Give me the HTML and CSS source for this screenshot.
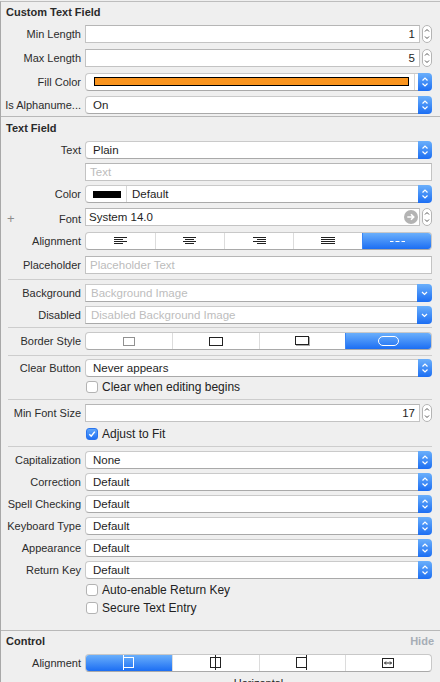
FILE: index.html
```html
<!DOCTYPE html>
<html>
<head>
<meta charset="utf-8">
<link rel="stylesheet" href="styles.css">
</head>
<body>
<div class="panel">
  <section class="sec">
    <div class="head h20"><span>Custom Text Field</span></div>
    <div class="row tall">
      <span class="lbl">Min Length</span>
      <div class="stepctl"><div class="field num">1</div>
        <svg class="stepper" width="10" height="18" viewBox="0 0 10 18"><rect x="0.5" y="0.5" width="9" height="17" rx="4.5" fill="#fff" stroke="#b4b4b4"/><path d="M3 6.5L5 4.5L7 6.5M3 11.5L5 13.5L7 11.5" fill="none" stroke="#555" stroke-width="1"/></svg></div>
    </div>
    <div class="row tall">
      <span class="lbl">Max Length</span>
      <div class="stepctl"><div class="field num">5</div>
        <svg class="stepper" width="10" height="18" viewBox="0 0 10 18"><rect x="0.5" y="0.5" width="9" height="17" rx="4.5" fill="#fff" stroke="#b4b4b4"/><path d="M3 6.5L5 4.5L7 6.5M3 11.5L5 13.5L7 11.5" fill="none" stroke="#555" stroke-width="1"/></svg></div>
    </div>
    <div class="row mid">
      <span class="lbl">Fill Color</span>
      <div class="popup"><span class="pv fill"><span class="swatch orange"></span><span class="vdiv"></span></span>
        <span class="pbtn"><svg width="14" height="18" viewBox="0 0 14 18"><path d="M4.5 7.5L7 5L9.5 7.5M4.5 10.5L7 13L9.5 10.5" fill="none" stroke="#fff" stroke-width="1.2"/></svg></span></div>
    </div>
    <div class="row mid">
      <span class="lbl">Is Alphanume...</span>
      <div class="popup"><span class="pv">On</span>
        <span class="pbtn"><svg width="14" height="18" viewBox="0 0 14 18"><path d="M4.5 7.5L7 5L9.5 7.5M4.5 10.5L7 13L9.5 10.5" fill="none" stroke="#fff" stroke-width="1.2"/></svg></span></div>
    </div>
  </section>

  <section class="sec">
    <div class="head h21"><span>Text Field</span></div>
    <div class="row mid">
      <span class="lbl">Text</span>
      <div class="popup"><span class="pv">Plain</span>
        <span class="pbtn"><svg width="14" height="18" viewBox="0 0 14 18"><path d="M4.5 7.5L7 5L9.5 7.5M4.5 10.5L7 13L9.5 10.5" fill="none" stroke="#fff" stroke-width="1.2"/></svg></span></div>
    </div>
    <div class="row">
      <span class="lbl"></span>
      <div class="field ph">Text</div>
    </div>
    <div class="row">
      <span class="lbl">Color</span>
      <div class="popup"><span class="pv color"><span class="swatch black"></span><span class="vdiv"></span><span class="ctext">Default</span></span>
        <span class="pbtn"><svg width="14" height="18" viewBox="0 0 14 18"><path d="M4.5 7.5L7 5L9.5 7.5M4.5 10.5L7 13L9.5 10.5" fill="none" stroke="#fff" stroke-width="1.2"/></svg></span></div>
    </div>
    <div class="row tall">
      <span class="lbl split low"><span class="plus">+</span><span>Font</span></span>
      <div class="stepctl"><div class="field font"><span>System 14.0</span>
          <svg width="14" height="14" viewBox="0 0 14 14"><circle cx="7" cy="7" r="7" fill="#b3b3b3"/><path d="M3.3 7h6.4M7 4.3L9.7 7L7 9.7" stroke="#fff" stroke-width="1.6" fill="none"/></svg></div>
        <svg class="stepper" width="10" height="18" viewBox="0 0 10 18"><rect x="0.5" y="0.5" width="9" height="17" rx="4.5" fill="#fff" stroke="#b4b4b4"/><path d="M3 6.5L5 4.5L7 6.5M3 11.5L5 13.5L7 11.5" fill="none" stroke="#555" stroke-width="1"/></svg></div>
    </div>
    <div class="row tall">
      <span class="lbl">Alignment</span>
      <div class="seg">
        <span><svg width="14" height="8" viewBox="0 0 14 8"><path d="M0 0.5h13M0 2.5h9M0 4.5h13M0 6.5h9" stroke="#222"/></svg></span>
        <span><svg width="14" height="8" viewBox="0 0 14 8"><path d="M0 0.5h13M2 2.5h9M0 4.5h13M2 6.5h9" stroke="#222"/></svg></span>
        <span><svg width="14" height="8" viewBox="0 0 14 8"><path d="M1 0.5h13M5 2.5h9M1 4.5h13M5 6.5h9" stroke="#222"/></svg></span>
        <span><svg width="14" height="8" viewBox="0 0 14 8"><path d="M0 0.5h14M0 2.5h14M0 4.5h14M0 6.5h14" stroke="#222"/></svg></span>
        <span class="on"><svg width="15" height="3" viewBox="0 0 15 3"><path d="M0 1.5h3.5M5.5 1.5h4M11.5 1.5h3.5" stroke="#fff" stroke-width="1.2"/></svg></span>
      </div>
    </div>
    <div class="row tall">
      <span class="lbl">Placeholder</span>
      <div class="field ph">Placeholder Text</div>
    </div>
    <div class="sep"></div>
    <div class="row tall">
      <span class="lbl">Background</span>
      <div class="popup combo"><span class="pv ph">Background Image</span>
        <span class="pbtn"><svg width="15" height="18" viewBox="0 0 15 18"><path d="M5 8L7.5 10.5L10 8" fill="none" stroke="#fff" stroke-width="1.2"/></svg></span></div>
    </div>
    <div class="row short">
      <span class="lbl">Disabled</span>
      <div class="popup combo"><span class="pv ph">Disabled Background Image</span>
        <span class="pbtn"><svg width="15" height="18" viewBox="0 0 15 18"><path d="M5 8L7.5 10.5L10 8" fill="none" stroke="#fff" stroke-width="1.2"/></svg></span></div>
    </div>
    <div class="sep"></div>
    <div class="row tall">
      <span class="lbl">Border Style</span>
      <div class="seg">
        <span><svg width="12" height="9" viewBox="0 0 12 9"><rect x="0.5" y="0.5" width="11" height="8" fill="none" stroke="#222" stroke-dasharray="1 1"/></svg></span>
        <span><svg width="14" height="9" viewBox="0 0 14 9"><rect x="0.5" y="0.5" width="13" height="8" fill="none" stroke="#222"/></svg></span>
        <span><svg width="15" height="10" viewBox="0 0 15 10"><rect x="0.5" y="0.5" width="13" height="8" fill="#fff" stroke="#222"/><path d="M1 9.5h14M14.5 1v9" stroke="#aaa"/></svg></span>
        <span class="on"><svg width="21" height="10" viewBox="0 0 21 10"><rect x="0.5" y="0.5" width="20" height="9" rx="4.5" fill="none" stroke="#fff"/></svg></span>
      </div>
    </div>
    <div class="sep"></div>
    <div class="row">
      <span class="lbl">Clear Button</span>
      <div class="popup"><span class="pv">Never appears</span>
        <span class="pbtn"><svg width="14" height="18" viewBox="0 0 14 18"><path d="M4.5 7.5L7 5L9.5 7.5M4.5 10.5L7 13L9.5 10.5" fill="none" stroke="#fff" stroke-width="1.2"/></svg></span></div>
    </div>
    <div class="row chkrow c16">
      <span class="lbl"></span>
      <label class="chk"><span class="box"></span>Clear when editing begins</label>
    </div>
    <div class="sep wide"></div>
    <div class="row short">
      <span class="lbl">Min Font Size</span>
      <div class="stepctl"><div class="field num">17</div>
        <svg class="stepper" width="10" height="18" viewBox="0 0 10 18"><rect x="0.5" y="0.5" width="9" height="17" rx="4.5" fill="#fff" stroke="#b4b4b4"/><path d="M3 6.5L5 4.5L7 6.5M3 11.5L5 13.5L7 11.5" fill="none" stroke="#555" stroke-width="1"/></svg></div>
    </div>
    <div class="row chkrow">
      <span class="lbl"></span>
      <label class="chk"><span class="box checked"><svg width="10" height="10" viewBox="0 0 10 10"><path d="M2.3 5.2L4.2 7.2L7.8 2.6" fill="none" stroke="#fff" stroke-width="1.5"/></svg></span>Adjust to Fit</label>
    </div>
    <div class="sep tight"></div>
    <div class="row">
      <span class="lbl">Capitalization</span>
      <div class="popup"><span class="pv">None</span>
        <span class="pbtn"><svg width="14" height="18" viewBox="0 0 14 18"><path d="M4.5 7.5L7 5L9.5 7.5M4.5 10.5L7 13L9.5 10.5" fill="none" stroke="#fff" stroke-width="1.2"/></svg></span></div>
    </div>
    <div class="row">
      <span class="lbl">Correction</span>
      <div class="popup"><span class="pv">Default</span>
        <span class="pbtn"><svg width="14" height="18" viewBox="0 0 14 18"><path d="M4.5 7.5L7 5L9.5 7.5M4.5 10.5L7 13L9.5 10.5" fill="none" stroke="#fff" stroke-width="1.2"/></svg></span></div>
    </div>
    <div class="row">
      <span class="lbl">Spell Checking</span>
      <div class="popup"><span class="pv">Default</span>
        <span class="pbtn"><svg width="14" height="18" viewBox="0 0 14 18"><path d="M4.5 7.5L7 5L9.5 7.5M4.5 10.5L7 13L9.5 10.5" fill="none" stroke="#fff" stroke-width="1.2"/></svg></span></div>
    </div>
    <div class="row">
      <span class="lbl">Keyboard Type</span>
      <div class="popup"><span class="pv">Default</span>
        <span class="pbtn"><svg width="14" height="18" viewBox="0 0 14 18"><path d="M4.5 7.5L7 5L9.5 7.5M4.5 10.5L7 13L9.5 10.5" fill="none" stroke="#fff" stroke-width="1.2"/></svg></span></div>
    </div>
    <div class="row">
      <span class="lbl">Appearance</span>
      <div class="popup"><span class="pv">Default</span>
        <span class="pbtn"><svg width="14" height="18" viewBox="0 0 14 18"><path d="M4.5 7.5L7 5L9.5 7.5M4.5 10.5L7 13L9.5 10.5" fill="none" stroke="#fff" stroke-width="1.2"/></svg></span></div>
    </div>
    <div class="row">
      <span class="lbl">Return Key</span>
      <div class="popup"><span class="pv">Default</span>
        <span class="pbtn"><svg width="14" height="18" viewBox="0 0 14 18"><path d="M4.5 7.5L7 5L9.5 7.5M4.5 10.5L7 13L9.5 10.5" fill="none" stroke="#fff" stroke-width="1.2"/></svg></span></div>
    </div>
    <div class="row chkrow c18">
      <span class="lbl"></span>
      <label class="chk"><span class="box"></span>Auto-enable Return Key</label>
    </div>
    <div class="row chkrow c18">
      <span class="lbl"></span>
      <label class="chk"><span class="box"></span>Secure Text Entry</label>
    </div>
    <div class="spacer"></div>
  </section>

  <section class="sec">
    <div class="head h19"><span>Control</span><span class="hide">Hide</span></div>
    <div class="row ctl">
      <span class="lbl">Alignment</span>
      <div class="seg">
        <span class="on"><svg width="12" height="16" viewBox="0 0 12 16"><path d="M0.5 0v15" stroke="#fff"/><rect x="0.5" y="2.5" width="10" height="10" fill="none" stroke="#fff"/></svg></span>
        <span><svg width="12" height="16" viewBox="0 0 12 16"><rect x="0.5" y="2.5" width="10" height="10" fill="none" stroke="#222"/><path d="M5.5 0v15" stroke="#222"/></svg></span>
        <span><svg width="12" height="16" viewBox="0 0 12 16"><rect x="0.5" y="2.5" width="10" height="10" fill="none" stroke="#222"/><path d="M10.5 0v15" stroke="#222"/></svg></span>
        <span><svg width="12" height="10" viewBox="0 0 12 10"><rect x="0.5" y="0.5" width="11" height="9" fill="none" stroke="#222"/><path d="M2.5 5h7M4 3.5L2.5 5L4 6.5M8 3.5L9.5 5L8 6.5" fill="none" stroke="#222"/></svg></span>
      </div>
    </div>
    <div class="row caption">
      <span class="lbl"></span>
      <span class="cap">Horizontal</span>
    </div>
  </section>
</div>
</body>
</html>
```
FILE: styles.css
```css
* { box-sizing: border-box; }
html, body { margin: 0; padding: 0; }
body {
  width: 440px;
  height: 682px;
  overflow: hidden;
  background: #efefef;
  font-family: "Liberation Sans", Arial, sans-serif;
  font-size: 11px;
  color: #262626;
}
.panel {
  margin-top: 1px;
  border-top: 1px solid #bdbdbd;
  border-left: 1px solid #a8a8a8;
  height: 681px;
}
.sec + .sec { border-top: 1px solid #b8b8b8; }

.head {
  display: flex;
  justify-content: space-between;
  align-items: center;
  padding: 0 6px 0 5px;
  font-weight: bold;
  color: #2a2a2a;
}
.h19 { height: 19px; }
.h20 { height: 20px; }
.h21 { height: 21px; }
.hide { color: #a6adb6; }

.row {
  display: grid;
  grid-template-columns: 80px 347px;
  column-gap: 4px;
  align-items: center;
  height: 22px;
}
.row.tall { height: 24px; }
.row.mid { height: 23px; }
.row.short { height: 20px; }
.row.c16 { height: 16px; }
.row.c18 { height: 18px; }
.row.ctl { height: 26px; }
.row.caption { height: 12px; align-items: start; }

.lbl {
  text-align: right;
  color: #2c2c2c;
  white-space: nowrap;
}
.lbl.split {
  display: flex;
  justify-content: space-between;
  padding-left: 6px;
}
.lbl.low { padding-top: 4px; }
.plus { color: #8c8c8c; font-size: 13px; line-height: 11px; }

.field {
  height: 18px;
  background: #fff;
  border: 1px solid #c3c3c3;
  border-top-color: #b6b6b6;
  line-height: 16px;
  padding: 0 4px;
  color: #1e1e1e;
  font-size: 11.5px;
  white-space: nowrap;
  overflow: hidden;
}
.field.num { text-align: right; padding-right: 4px; }
.field.ph { color: #bcbcbc; }
.field.font {
  display: flex;
  align-items: center;
  justify-content: space-between;
  padding: 0 1px 0 3px;
}
.stepctl {
  display: flex;
  gap: 2px;
  align-items: center;
}
.stepctl .field { flex: 1; }
.stepper { flex: none; display: block; }

.popup {
  display: flex;
  height: 18px;
}
.pv {
  flex: 1;
  background: #fff;
  border: 1px solid #cacaca;
  border-bottom-color: #a9a9a9;
  border-right: 0;
  border-radius: 4px 0 0 4px;
  padding-left: 7px;
  line-height: 16px;
  color: #1e1e1e;
  font-size: 11.5px;
  white-space: nowrap;
  overflow: hidden;
}
.pbtn {
  flex: none;
  width: 14px;
  border-radius: 0 4px 4px 0;
  background: linear-gradient(#6aaffb, #1c6ef3);
  display: flex;
  align-items: center;
  justify-content: center;
}
.combo .pv { border-radius: 0; padding-left: 5px; }
.combo .pbtn { width: 15px; }
.pv.ph { color: #bdbdbd; }

.pv.fill {
  display: flex;
  align-items: center;
  padding: 0 3px 0 8px;
}
.pv.color {
  display: flex;
  align-items: center;
  padding-left: 7px;
}
.swatch { display: block; height: 9px; border: 1px solid #000; }
.swatch.orange { flex: 1; background: #f9941e; margin-right: 5px; }
.swatch.black { width: 28px; height: 7px; background: #000; margin-right: 5px; }
.vdiv { align-self: stretch; width: 1px; background: #d6d6d6; }
.ctext { margin-left: 5px; }

.seg {
  display: grid;
  grid-auto-flow: column;
  grid-auto-columns: 1fr;
  height: 18px;
  background: #fff;
  border: 1px solid #c8c8c8;
  border-bottom-color: #a9a9a9;
  border-radius: 4px;
  overflow: hidden;
}
.seg > span {
  display: flex;
  align-items: center;
  justify-content: center;
  border-left: 1px solid #dcdcdc;
}
.seg > span:first-child { border-left: 0; }
.seg > span.on {
  background: linear-gradient(#6aaffb, #1c6ef3);
  border-left-color: #3b86f5;
}
.seg svg { display: block; }

.sep {
  height: 1px;
  background: #cdcdcd;
  margin: 2px 8px 1px 7px;
}
.sep.wide { margin: 4px 8px 3px 7px; }
.sep.tight { margin: 1px 8px 2px 7px; }
.spacer { height: 13px; }

.chk {
  display: flex;
  align-items: center;
  gap: 4px;
  font-size: 12px;
  color: #222;
  margin-left: 1px;
  white-space: nowrap;
}
.box {
  flex: none;
  width: 12px;
  height: 12px;
  background: #fff;
  border: 1px solid #b3b3b3;
  border-radius: 3px;
  display: flex;
  align-items: center;
  justify-content: center;
}
.box.checked {
  background: linear-gradient(#5fa6fa, #1f70f3);
  border-color: #2a74ee;
}
.cap { text-align: center; color: #222; line-height: 12px; padding-top: 1px; }
```
